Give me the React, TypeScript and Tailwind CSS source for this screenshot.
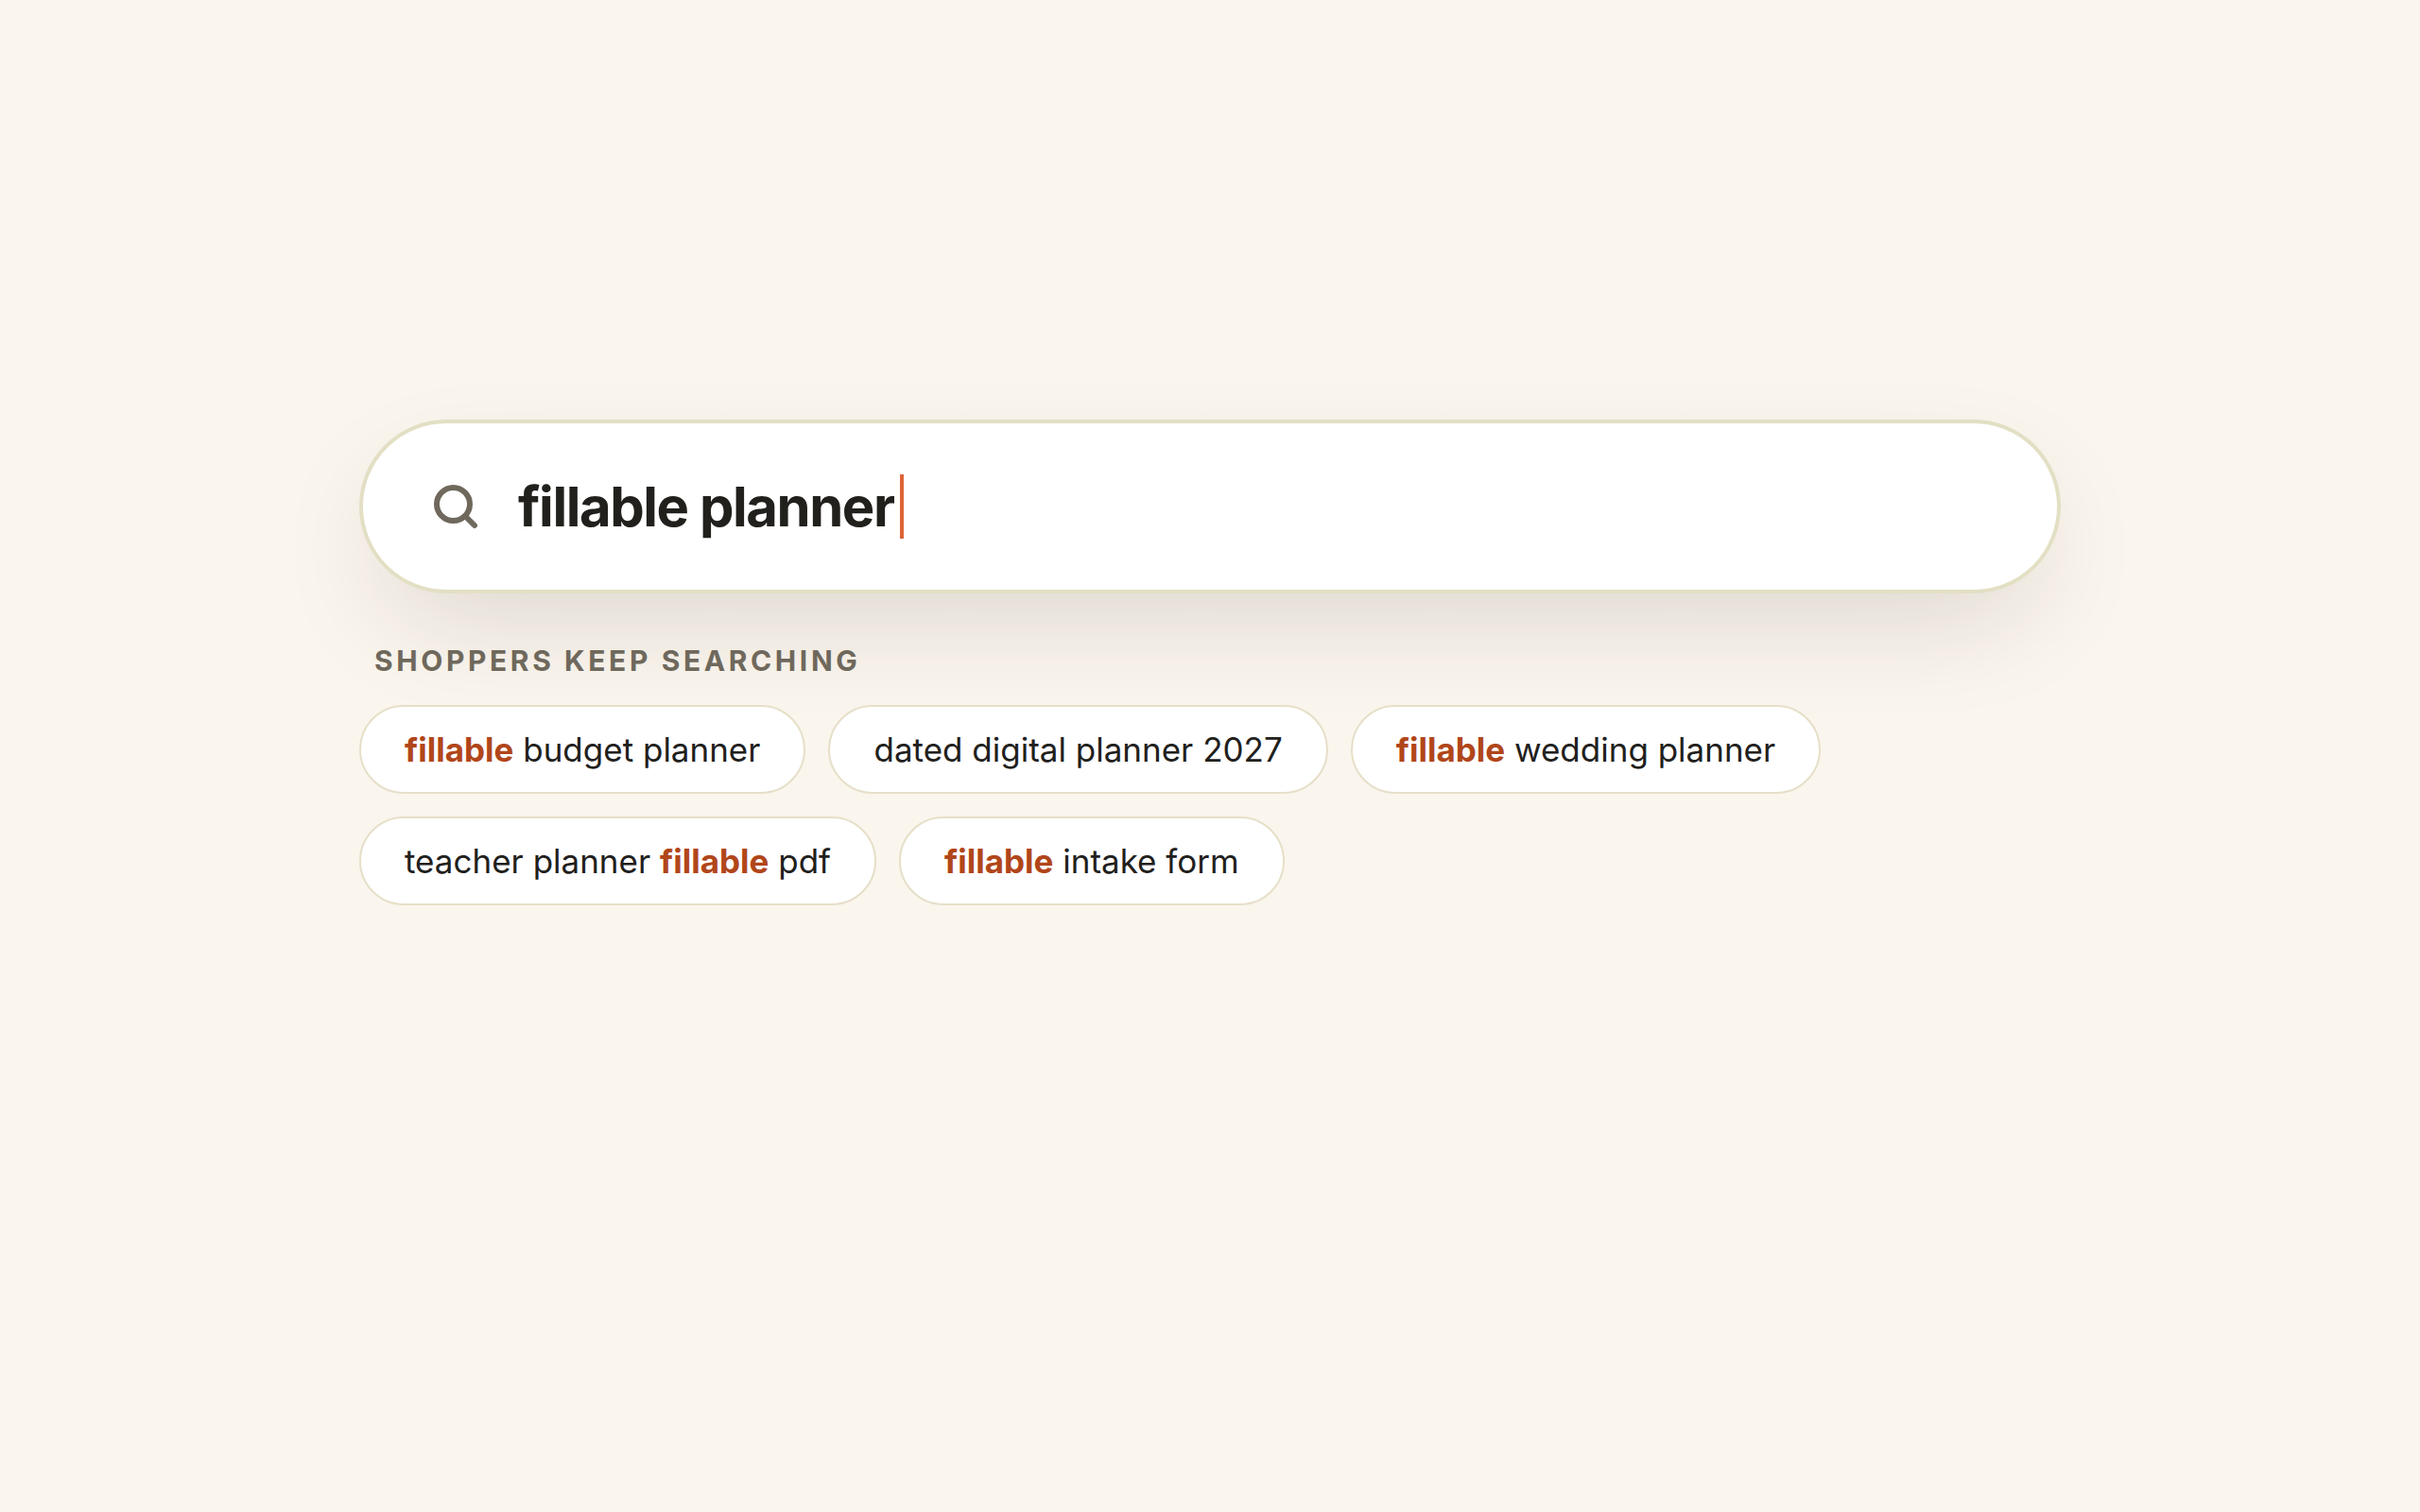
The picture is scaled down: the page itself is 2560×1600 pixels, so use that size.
import { useState } from "react";

const suggestions = [
    "fillable budget planner",
    "dated digital planner 2027",
    "fillable wedding planner",
    "teacher planner fillable pdf",
    "fillable intake form",
];

// Highlights every occurrence of the keyword inside a suggestion
function Highlighted({ text, keyword }: { text: string; keyword: string }) {
    return (
        <>
            {text.split(new RegExp(`(${keyword})`)).map((part, index) =>
                part === keyword ? (
                    <strong key={index} className="font-bold text-[#b1461a]">
                        {part}
                    </strong>
                ) : (
                    part
                )
            )}
        </>
    );
}

function SearchIcon() {
    return (
        <svg
            viewBox="0 0 24 24"
            className="size-[60px] shrink-0 text-[#6f685c]"
            fill="none"
            stroke="currentColor"
            strokeWidth="2.4"
            strokeLinecap="round"
            aria-hidden="true"
        >
            <circle cx="11" cy="11" r="7" />
            <path d="m20 20-3.8-3.8" />
        </svg>
    );
}

export default function App() {
    const [query, setQuery] = useState("fillable planner");

    return (
        <main className="min-h-screen bg-[#faf5ed] px-10 pt-[444px] pb-20 font-['Inter',sans-serif] text-[#21201c]">
            <div className="mx-auto w-full max-w-[1800px]">
                <label className="flex items-center gap-9 rounded-full border-4 border-[#e3dfc4] bg-white px-[68px] py-[54px] shadow-[0_44px_120px_-32px_rgba(40,30,24,0.17)]">
                    <SearchIcon />
                    <span className="flex items-center gap-1.5">
                        <input
                            type="text"
                            aria-label="Search"
                            value={query}
                            onChange={(e) => setQuery(e.target.value)}
                            className="field-sizing-content h-[68px] text-[58px] font-bold tracking-tight caret-transparent outline-none"
                        />
                        <span className="h-[68px] w-1 bg-[#de6437]" />
                    </span>
                </label>

                <h2 className="mt-[51px] px-4 text-[30px] leading-10 font-bold tracking-[0.12em] text-[#6f685c] uppercase">
                    Shoppers keep searching
                </h2>

                <div className="mt-[27px] flex flex-wrap gap-6">
                    {suggestions.map((text) => (
                        <button
                            key={text}
                            type="button"
                            onClick={() => setQuery(text)}
                            className="rounded-full border-2 border-[#e6dfc8] bg-white px-[46px] py-[22px] text-[35px] leading-[46px]"
                        >
                            <Highlighted text={text} keyword="fillable" />
                        </button>
                    ))}
                </div>
            </div>
        </main>
    );
}
